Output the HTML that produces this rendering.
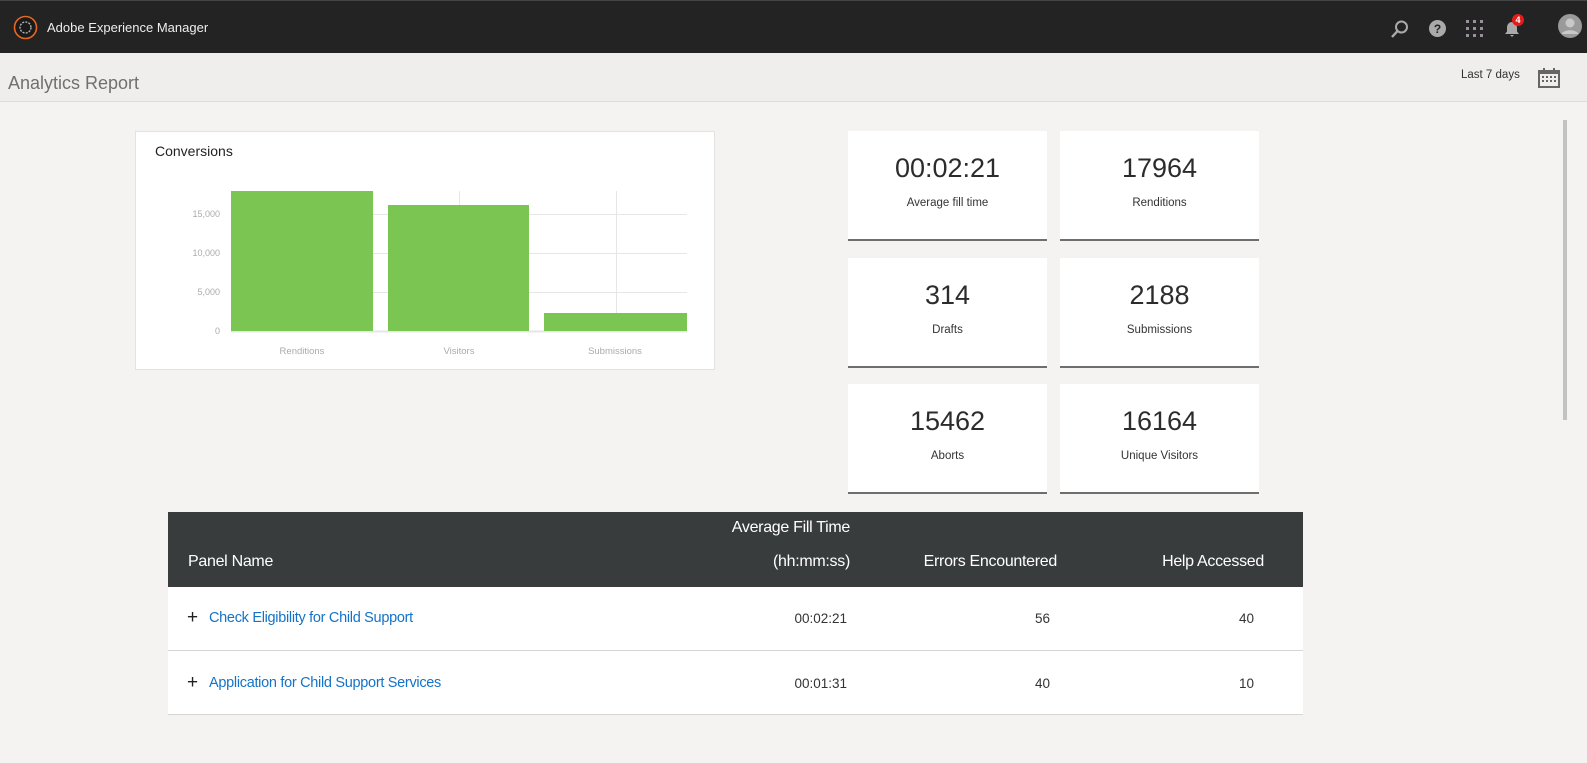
<!DOCTYPE html>
<html><head><meta charset="utf-8"><style>
*{margin:0;padding:0;box-sizing:border-box}
body{width:1587px;height:763px;overflow:hidden;background:#f4f3f1;font-family:"Liberation Sans",sans-serif;position:relative;color:#323232}
.a{position:absolute}
.top{left:0;top:0;width:1587px;height:53px;background:#232323;border-top:1px solid #444}
.sub{left:0;top:53px;width:1587px;height:49px;background:#efeeed;border-bottom:1px solid #dcdcdc}
.tile{position:absolute;width:199px;height:110px;background:#fff;border-bottom:2px solid #6e6e6e;text-align:center}
.tile .n{position:absolute;left:0;right:0;top:22px;font-size:27px;color:#2c2c2c}
.tile .l{position:absolute;left:0;right:0;top:66px;font-size:11.5px;color:#333}
.r{text-align:right}
.th{color:#fff;font-size:16px;letter-spacing:-0.3px}
.td{font-size:13.5px;color:#333}
.lnk{color:#1473c8;font-size:14.5px;letter-spacing:-0.3px}
.yl{font-size:9px;color:#aaa;width:40px;text-align:right}
.xl{font-size:9.5px;color:#aaa;text-align:center;width:142px}
</style></head><body>
<div class="a top"></div>
<svg class="a" style="left:13px;top:15px" width="25" height="25" viewBox="0 0 25 25"><circle cx="12.5" cy="12.5" r="11" fill="#1a1a1a" stroke="#e8681f" stroke-width="1.6"/><circle cx="12.5" cy="12.5" r="5.5" fill="none" stroke="#bbb" stroke-width="1.3" stroke-dasharray="2 1.2"/></svg>
<div class="a" style="left:47px;top:20px;color:#eee;font-size:13px">Adobe Experience Manager</div>
<svg class="a" style="left:1390px;top:19px" width="20" height="20" viewBox="0 0 20 20"><circle cx="11.5" cy="8" r="5.5" fill="none" stroke="#aaa" stroke-width="2"/><path d="M7.5 12L2 18" stroke="#aaa" stroke-width="2.4"/></svg>
<svg class="a" style="left:1428px;top:19px" width="19" height="19"><circle cx="9.5" cy="9.5" r="8.5" fill="#aaa"/><text x="9.5" y="14" text-anchor="middle" font-size="12" font-weight="bold" fill="#232323" font-family="Liberation Sans">?</text></svg>
<svg class="a" style="left:1466px;top:20px" width="17" height="17"><g fill="#9a8f9c"><rect x="0" y="0" width="3" height="3"/><rect x="7" y="0" width="3" height="3"/><rect x="14" y="0" width="3" height="3"/><rect x="0" y="7" width="3" height="3"/><rect x="7" y="7" width="3" height="3"/><rect x="14" y="7" width="3" height="3"/><rect x="0" y="14" width="3" height="3"/><rect x="7" y="14" width="3" height="3"/><rect x="14" y="14" width="3" height="3"/></g></svg>
<svg class="a" style="left:1503px;top:20px" width="18" height="18"><path d="M9 2c-3 0-5 2.5-5 5.5v4L2 14h14l-2-2.5v-4C14 4.5 12 2 9 2zM7 15h4l-2 2z" fill="#aaa"/></svg>
<div class="a" style="left:1512px;top:14px;width:12px;height:12px;border-radius:50%;background:#e41b1b;color:#fff;font-size:9px;font-weight:bold;text-align:center;line-height:12px">4</div>
<svg class="a" style="left:1558px;top:14px" width="24" height="24"><circle cx="12" cy="12" r="12" fill="#9a9a9a"/><circle cx="12" cy="9" r="4.5" fill="#c8c8c8"/><path d="M3.5 20c2-5 15-5 17 0" fill="#c8c8c8"/></svg>
<div class="a sub"></div>
<div class="a" style="left:8px;top:73px;font-size:18px;color:#707070">Analytics Report</div>
<div class="a" style="left:1461px;top:69px;font-size:11.5px;color:#333">Last 7 days</div>
<svg class="a" style="left:1538px;top:68px" width="22" height="20"><rect x="1" y="3" width="20" height="16" fill="none" stroke="#666" stroke-width="2"/><rect x="1" y="3" width="20" height="3" fill="#666"/><rect x="5" y="0" width="2" height="4" fill="#666"/><rect x="15" y="0" width="2" height="4" fill="#666"/><g fill="#666"><rect x="4" y="8" width="2" height="2"/><rect x="8" y="8" width="2" height="2"/><rect x="12" y="8" width="2" height="2"/><rect x="16" y="8" width="2" height="2"/><rect x="4" y="12" width="2" height="2"/><rect x="8" y="12" width="2" height="2"/><rect x="12" y="12" width="2" height="2"/><rect x="16" y="12" width="2" height="2"/></g></svg>
<div class="a" style="left:1562px;top:103px;width:25px;height:660px;background:#f4f3f1"></div>
<div class="a" style="left:1563px;top:120px;width:4px;height:300px;background:#c2c2c0"></div>

<div class="a" style="left:135px;top:131px;width:580px;height:239px;background:#fff;border:1px solid #e2e2e2"></div>
<div class="a" style="left:155px;top:143px;font-size:14px;color:#222">Conversions</div>
<svg class="a" style="left:231px;top:185px" width="456" height="150">
<g stroke="#e6e6e6" stroke-width="1"><line x1="0" y1="29.5" x2="456" y2="29.5"/><line x1="0" y1="68.5" x2="456" y2="68.5"/><line x1="0" y1="107.5" x2="456" y2="107.5"/><line x1="228.5" y1="6" x2="228.5" y2="146"/><line x1="385.5" y1="6" x2="385.5" y2="146"/></g>
<line x1="0" y1="146.5" x2="456" y2="146.5" stroke="#e6e6e6" stroke-width="2"/>
<rect x="0" y="6" width="142" height="140" fill="#7bc552"/><rect x="157" y="20" width="141" height="126" fill="#7bc552"/><rect x="313" y="128" width="143" height="18" fill="#7bc552"/></svg>
<div class="a yl" style="left:180px;top:209px">15,000</div>
<div class="a yl" style="left:180px;top:248px">10,000</div>
<div class="a yl" style="left:180px;top:287px">5,000</div>
<div class="a yl" style="left:180px;top:326px">0</div>
<div class="a xl" style="left:231px;top:346px">Renditions</div>
<div class="a xl" style="left:388px;top:346px">Visitors</div>
<div class="a xl" style="left:544px;top:346px">Submissions</div>

<div class="tile" style="left:848px;top:131px"><div class="n">00:02:21</div><div class="l">Average fill time</div></div>
<div class="tile" style="left:1060px;top:131px"><div class="n">17964</div><div class="l">Renditions</div></div>
<div class="tile" style="left:848px;top:258px"><div class="n">314</div><div class="l">Drafts</div></div>
<div class="tile" style="left:1060px;top:258px"><div class="n">2188</div><div class="l">Submissions</div></div>
<div class="tile" style="left:848px;top:384px"><div class="n">15462</div><div class="l">Aborts</div></div>
<div class="tile" style="left:1060px;top:384px"><div class="n">16164</div><div class="l">Unique Visitors</div></div>

<div class="a" style="left:168px;top:512px;width:1135px;height:75px;background:#393c3c"></div>
<div class="a th r" style="left:600px;width:250px;top:519px">Average Fill Time</div>
<div class="a th r" style="left:600px;width:250px;top:553px">(hh:mm:ss)</div>
<div class="a th" style="left:188px;top:553px">Panel Name</div>
<div class="a th r" style="left:850px;width:207px;top:553px">Errors Encountered</div>
<div class="a th r" style="left:1060px;width:204px;top:553px">Help Accessed</div>
<div class="a" style="left:168px;top:587px;width:1135px;height:128px;background:#fff"></div>
<div class="a" style="left:168px;top:650px;width:1135px;height:1px;background:#d5d5d3"></div>
<div class="a" style="left:168px;top:714px;width:1135px;height:1px;background:#d5d5d3"></div>
<div class="a" style="left:187px;top:607px;font-size:19px;color:#222">+</div>
<div class="a" style="left:187px;top:672px;font-size:19px;color:#222">+</div>
<div class="a lnk" style="left:209px;top:610px">Check Eligibility for Child Support</div>
<div class="a lnk" style="left:209px;top:675px">Application for Child Support Services</div>
<div class="a td r" style="left:700px;width:147px;top:611px">00:02:21</div>
<div class="a td r" style="left:700px;width:147px;top:676px">00:01:31</div>
<div class="a td r" style="left:950px;width:100px;top:611px">56</div>
<div class="a td r" style="left:950px;width:100px;top:676px">40</div>
<div class="a td r" style="left:1154px;width:100px;top:611px">40</div>
<div class="a td r" style="left:1154px;width:100px;top:676px">10</div>
</body></html>
